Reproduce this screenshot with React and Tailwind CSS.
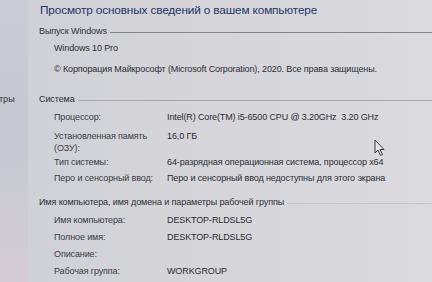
const FONT = { fontFamily: '"Liberation Sans", Arial, sans-serif' }

function Header({ title, className = '', line = 'bg-[#8e8e95]' }) {
  return (
    <div className={`flex items-center h-[14px] pl-[11px] ${className}`}>
      <span className="text-[9px] tracking-[-0.1px] text-[#2e2e36] whitespace-nowrap">{title}</span>
      <div className={`flex-1 h-px ml-[3px] ${line}`} />
    </div>
  )
}

function Row({ label, value, h = 'h-[17px]' }) {
  return (
    <div className={`flex items-center pl-[26px] ${h} text-[9px] tracking-[-0.12px] whitespace-nowrap`}>
      <span className="w-[113px] text-[#3a3a44]">{label}</span>
      <span className="text-[#2b2b33]">{value}</span>
    </div>
  )
}

export default function App() {
  return (
    <div
      style={FONT}
      className="relative w-[432px] h-[282px] overflow-hidden flex bg-gradient-to-r from-[#cfd0d6] via-[#d6d6da] to-[#dbdbdf]"
    >
      {/* left nav strip */}
      <div className="w-[28px] shrink-0 bg-gradient-to-b from-[#c9ccd4] via-[#c6c9d2] to-[#d4ccd4] pt-[93px]">
        <div className="h-[14px] flex items-center text-[9px] text-[#2a2e3a] -ml-[1px]">тры</div>
      </div>

      <div className="flex-1 flex flex-col">
        <div className="h-[22px] flex items-center pl-[12px] text-[11.8px] tracking-[-0.15px] text-[#1f3469] whitespace-nowrap">
          Просмотр основных сведений о вашем компьютере
        </div>

        <Header title="Выпуск Windows" className="mt-[3px]" line="bg-[#85858c]" />
        <div className="h-[20px] flex items-center pl-[26px] text-[9px] tracking-[-0.12px] text-[#2b2b33]">Windows 10 Pro</div>
        <div className="h-[22px] flex items-center pl-[26px] text-[9px] tracking-[-0.12px] text-[#2b2b33] whitespace-nowrap">
          © Корпорация Майкрософт (Microsoft Corporation), 2020. Все права защищены.
        </div>

        <Header title="Система" className="mt-[12px]" line="bg-[#a6a6ac]" />
        <Row label="Процессор:" value={'Intel(R) Core(TM) i5-6500 CPU @ 3.20GHz\u00a0\u00a03.20 GHz'} h="h-[22px]" />
        <div className="flex pl-[26px] pt-[1px] h-[24px] text-[9px] tracking-[-0.12px] leading-[12px]">
          <span className="w-[113px] text-[#3a3a44]">
            Установленная память
            <br />
            (ОЗУ):
          </span>
          <span className="text-[#2b2b33]">16,0 ГБ</span>
        </div>
        <Row label="Тип системы:" value="64-разрядная операционная система, процессор x64" h="h-[20px]" />
        <Row label="Перо и сенсорный ввод:" value="Перо и сенсорный ввод недоступны для этого экрана" h="h-[12px]" />

        <Header
          title="Имя компьютера, имя домена и параметры рабочей группы"
          className="mt-[11px]"
          line="bg-[#c2c2c8]"
        />
        <div className="mt-[2px]">
          <Row label="Имя компьютера:" value="DESKTOP-RLDSL5G" />
          <Row label="Полное имя:" value="DESKTOP-RLDSL5G" />
          <Row label="Описание:" value="" />
          <Row label="Рабочая группа:" value="WORKGROUP" />
        </div>
      </div>

      {/* mouse cursor */}
      <svg className="absolute left-[374px] top-[139px]" width="12" height="18" viewBox="0 0 12 18">
        <path
          d="M1 1 L1 14 L4 11 L6.5 16.5 L8.5 15.5 L6 10.5 L10 10.5 Z"
          fill="#e4e4e8"
          stroke="#3a3a44"
          strokeWidth="1"
          strokeLinejoin="round"
        />
      </svg>
    </div>
  )
}
